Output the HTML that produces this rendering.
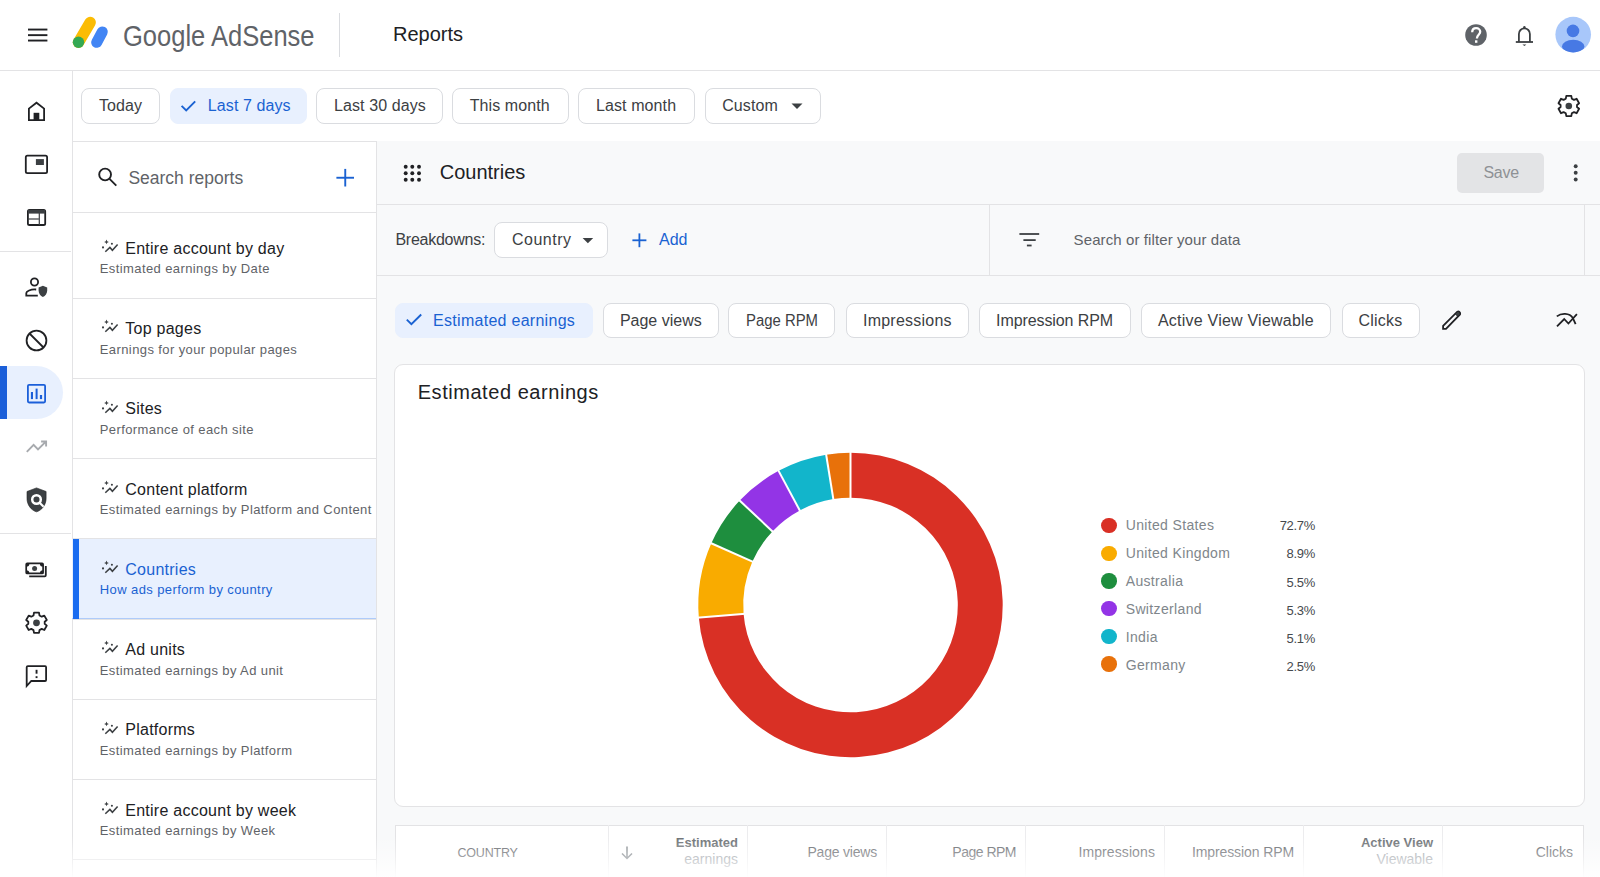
<!DOCTYPE html>
<html><head><meta charset="utf-8">
<style>
*{box-sizing:border-box;margin:0;padding:0}
html,body{width:1600px;height:877px;overflow:hidden;background:#fff;font-family:"Liberation Sans",sans-serif;color:#202124;position:relative}
.box{position:absolute}
.t{position:absolute;white-space:nowrap}
svg.box{overflow:visible}
</style></head><body>
<div class="box" style="left:0;top:0;width:1600px;height:70px;background:#fff"></div>
<div class="box" style="left:0;top:70px;width:1600px;height:1px;background:#e3e3e5"></div>
<svg class="box" style="left:0;top:0" width="60" height="60"><g fill="#202124"><rect x="28" y="28.6" width="19.4" height="1.9"/><rect x="28" y="34.2" width="19.4" height="1.9"/><rect x="28" y="39.6" width="19.4" height="1.9"/></g></svg>
<svg class="box" style="left:60px;top:10px" width="60" height="50" viewBox="60 10 60 50">
<line x1="90.2" y1="22.4" x2="78.5" y2="42.3" stroke="#fbbc04" stroke-width="11.4" stroke-linecap="round"/>
<circle cx="78.5" cy="42.3" r="5.7" fill="#34a853"/>
<line x1="102.3" y1="31.9" x2="96.7" y2="42.3" stroke="#4285f4" stroke-width="11" stroke-linecap="round"/>
</svg>
<div class="t" style="left:122.5px;top:21px;font-size:29.5px;line-height:29.5px;color:#5f6368;transform:scaleX(0.865);transform-origin:0 0;">Google AdSense</div>
<div class="box" style="left:339px;top:13px;width:1px;height:44px;background:#dadce0"></div>
<div class="t" style="left:393px;top:24px;font-size:20px;line-height:20px;color:#202124;">Reports</div>
<svg class="box" style="left:1456px;top:15px" width="40" height="40" viewBox="1456 15 40 40">
<circle cx="1476" cy="35" r="10.8" fill="#5f6368"/>
<path d="M1472.2 32.3c0-2.5 1.7-4.1 4-4.1s4 1.6 4 3.6c0 2.9-3.3 3.1-3.3 6.6" fill="none" stroke="#fff" stroke-width="2.3"/>
<rect x="1475" y="40.3" width="2.4" height="2.5" fill="#fff"/>
</svg>
<svg class="box" style="left:1504px;top:15px" width="40" height="40" viewBox="1504 15 40 40">
<path d="M1518.9 42V33.9A5.5 5.5 0 0 1 1529.9 33.9V42" fill="none" stroke="#3c4043" stroke-width="1.8"/>
<rect x="1515.8" y="41.1" width="17.2" height="1.8" fill="#3c4043"/>
<circle cx="1524.4" cy="27.2" r="1.2" fill="#3c4043"/>
<path d="M1522.4 44.4h4l-2 1.7z" fill="#3c4043"/>
</svg>
<svg class="box" style="left:1550px;top:12px" width="46" height="46" viewBox="1550 12 46 46">
<defs><clipPath id="av"><circle cx="1573.2" cy="34.6" r="17.8"/></clipPath></defs>
<circle cx="1573.2" cy="34.6" r="17.8" fill="#a8c7fa"/>
<g clip-path="url(#av)" fill="#4779e4">
<circle cx="1573" cy="30.9" r="6.3"/>
<ellipse cx="1573.2" cy="46.5" rx="11.2" ry="6.8"/>
</g>
</svg>
<div class="box" style="left:72px;top:70px;width:1px;height:807px;background:#e3e3e5"></div>
<div class="box" style="left:0;top:251px;width:71px;height:1px;background:#e3e3e5"></div>
<div class="box" style="left:0;top:533px;width:71px;height:1px;background:#e3e3e5"></div>
<div class="box" style="left:7px;top:366px;width:56px;height:53px;background:#e8f0fe;border-radius:0 26.5px 26.5px 0"></div>
<div class="box" style="left:0;top:366px;width:7px;height:53px;background:#1b5fd9"></div>
<svg class="box" style="left:0;top:70px" width="71" height="640" viewBox="0 70 71 640">
<!-- home -->
<path d="M28.9 120.2V108.6L36.5 102.7L44.1 108.6V120.2Z" fill="none" stroke="#202124" stroke-width="1.8" stroke-linejoin="miter"/>
<rect x="33.6" y="112.8" width="5.7" height="7.6" fill="#202124"/>
<!-- ad card -->
<rect x="25.8" y="155.6" width="21.3" height="17.5" rx="1.6" fill="none" stroke="#202124" stroke-width="1.8"/>
<rect x="35.9" y="159.1" width="8" height="5.9" fill="#3c4043"/>
<!-- layout -->
<rect x="27.9" y="209.8" width="17.3" height="15.2" rx="1.6" fill="none" stroke="#202124" stroke-width="1.8"/>
<rect x="27.9" y="209.8" width="17.3" height="3.8" fill="#3c4043"/>
<rect x="38.7" y="213" width="1.2" height="12" fill="#3c4043"/>
<rect x="27.9" y="218.4" width="11" height="1.2" fill="#3c4043"/>
<!-- person shield -->
<circle cx="34.5" cy="282" r="3.6" fill="none" stroke="#202124" stroke-width="1.8"/>
<path d="M36.2 289.5c-0.6-0.05-1.1-0.1-1.7-0.1c-3.6 0-8.2 1.6-8.2 3.7v2.5h11.5" fill="none" stroke="#202124" stroke-width="1.8"/>
<path d="M42.9 285.8l-4.3 1.6v3.2c0 2.9 1.8 5.5 4.3 6.3c2.5-0.8 4.3-3.4 4.3-6.3v-3.2z" fill="#3c4043"/>
<!-- block -->
<circle cx="36.5" cy="340.5" r="9.9" fill="none" stroke="#202124" stroke-width="1.8"/>
<line x1="29.5" y1="333.5" x2="43.5" y2="347.5" stroke="#202124" stroke-width="1.8"/>
<!-- chart (active) -->
<rect x="27.9" y="384.9" width="17.2" height="17.6" rx="1.2" fill="none" stroke="#1b5fd9" stroke-width="1.8"/>
<rect x="30.9" y="392" width="2.1" height="7.1" fill="#1b5fd9"/>
<rect x="35.6" y="388.6" width="2" height="10.5" fill="#1b5fd9"/>
<rect x="39.9" y="395" width="2.2" height="4.1" fill="#1b5fd9"/>
<!-- trending -->
<path d="M26.8 451.8L33.6 444.9L38 449.4L45.6 441.8M41.1 441.5H46.1V446.5" fill="none" stroke="#a7aaae" stroke-width="1.9"/>
<!-- shield search -->
<path d="M36.5 487.9L27 491.5V498.4C27 504.7 31.1 510.3 36.5 511.8C41.9 510.3 46.1 504.7 46.1 498.4V491.5Z" fill="#3c4043" stroke="#202124" stroke-width="0.6"/>
<circle cx="36.5" cy="499.5" r="4.3" fill="none" stroke="#fff" stroke-width="2.5"/>
<line x1="39.6" y1="502.7" x2="43.6" y2="506.8" stroke="#fff" stroke-width="2.2"/>
<!-- money -->
<rect x="26.2" y="563.4" width="16.9" height="10" rx="1" fill="none" stroke="#202124" stroke-width="1.7"/>
<circle cx="34.6" cy="568.4" r="2.5" fill="#3c4043"/>
<path d="M26.2 563.4h3.2a3.2 3.2 0 0 1-3.2 3.2zM43.1 563.4h-3.2a3.2 3.2 0 0 0 3.2 3.2zM26.2 573.4h3.2a3.2 3.2 0 0 0-3.2-3.2zM43.1 573.4h-3.2a3.2 3.2 0 0 1 3.2-3.2z" fill="#202124"/>
<path d="M29.2 576.3H44.8Q45.8 576.3 45.8 575.3V566" fill="none" stroke="#202124" stroke-width="1.8"/>
<!-- gear -->
<g transform="translate(36.5 622.8)">
<path d="M-2.5 -10.1H2.5L3 -7.3L5.2 -6.1L7.8 -7.2L10.3 -2.8L8.2 -1V1L10.3 2.8L7.8 7.2L5.2 6.1L3 7.3L2.5 10.1H-2.5L-3 7.3L-5.2 6.1L-7.8 7.2L-10.3 2.8L-8.2 1V-1L-10.3 -2.8L-7.8 -7.2L-5.2 -6.1L-3 -7.3Z" fill="none" stroke="#202124" stroke-width="1.8" stroke-linejoin="round"/>
<circle cx="0" cy="0" r="3.4" fill="#3c4043"/>
</g>
<!-- feedback -->
<path d="M26.7 686V667.3C26.7 666.6 27.2 666.2 27.9 666.2H45.1C45.7 666.2 46.1 666.6 46.1 667.3V680C46.1 680.6 45.7 681 45.1 681H31.3Z" fill="none" stroke="#202124" stroke-width="1.8" stroke-linejoin="miter"/>
<rect x="35.6" y="669.8" width="1.9" height="3.9" fill="#202124"/>
<rect x="35.6" y="676.2" width="1.9" height="1.9" fill="#202124"/>
</svg>
<div class="box" style="left:72px;top:141px;width:1528px;height:1px;background:#e3e3e5"></div>
<div class="box" style="left:81px;top:88px;width:79px;height:35.5px;background:#fff;border:1px solid #dadce0;border-radius:8px"></div>
<div class="t" style="left:99px;top:98px;font-size:16px;line-height:16px;color:#3c4043;letter-spacing:0.1px;">Today</div>
<div class="box" style="left:169.5px;top:88px;width:137.5px;height:35.5px;background:#e8f0fe;border:1px solid #e8f0fe;border-radius:8px"></div>
<div class="t" style="left:207.8px;top:98px;font-size:16px;line-height:16px;color:#1a62d2;letter-spacing:0.1px;">Last 7 days</div>
<div class="box" style="left:316px;top:88px;width:127px;height:35.5px;background:#fff;border:1px solid #dadce0;border-radius:8px"></div>
<div class="t" style="left:334px;top:98px;font-size:16px;line-height:16px;color:#3c4043;letter-spacing:0.1px;">Last 30 days</div>
<div class="box" style="left:452px;top:88px;width:116.5px;height:35.5px;background:#fff;border:1px solid #dadce0;border-radius:8px"></div>
<div class="t" style="left:469.7px;top:98px;font-size:16px;line-height:16px;color:#3c4043;letter-spacing:0.1px;">This month</div>
<div class="box" style="left:578px;top:88px;width:117px;height:35.5px;background:#fff;border:1px solid #dadce0;border-radius:8px"></div>
<div class="t" style="left:596px;top:98px;font-size:16px;line-height:16px;color:#3c4043;letter-spacing:0.1px;">Last month</div>
<div class="box" style="left:704.5px;top:88px;width:116.0px;height:35.5px;background:#fff;border:1px solid #dadce0;border-radius:8px"></div>
<div class="t" style="left:722.2px;top:98px;font-size:16px;line-height:16px;color:#3c4043;letter-spacing:0.1px;">Custom</div>
<svg class="box" style="left:175px;top:95px" width="26" height="22" viewBox="175 95 26 22"><path d="M181.6 105.8L186.2 110.4L195.2 101.3" fill="none" stroke="#1a62d2" stroke-width="1.9"/></svg>
<svg class="box" style="left:785px;top:98px" width="24" height="16" viewBox="785 98 24 16"><path d="M791.5 103.6H802.5L797 108.9Z" fill="#3c4043"/></svg>
<svg class="box" style="left:1548px;top:85px" width="42" height="42" viewBox="-21 -21 42 42">
<g transform="translate(-0.2 0)">
<path d="M-2.5 -10.1H2.5L3 -7.3L5.2 -6.1L7.8 -7.2L10.3 -2.8L8.2 -1V1L10.3 2.8L7.8 7.2L5.2 6.1L3 7.3L2.5 10.1H-2.5L-3 7.3L-5.2 6.1L-7.8 7.2L-10.3 2.8L-8.2 1V-1L-10.3 -2.8L-7.8 -7.2L-5.2 -6.1L-3 -7.3Z" fill="none" stroke="#202124" stroke-width="1.8" stroke-linejoin="round"/>
<circle cx="0" cy="0" r="3.3" fill="#3c4043"/>
</g></svg>
<div class="box" style="left:73px;top:142px;width:304px;height:735px;background:#fff"></div>
<div class="box" style="left:376px;top:141px;width:1px;height:736px;background:#e3e3e5"></div>
<svg class="box" style="left:92px;top:160px" width="32" height="32" viewBox="92 160 32 32"><circle cx="105.1" cy="174.5" r="5.9" fill="none" stroke="#202124" stroke-width="1.9"/><line x1="109.3" y1="178.7" x2="116.3" y2="185.7" stroke="#202124" stroke-width="1.9"/></svg>
<div class="t" style="left:128.4px;top:170px;font-size:17.5px;line-height:17.5px;color:#5f6368;">Search reports</div>
<svg class="box" style="left:330px;top:162px" width="30" height="30" viewBox="330 162 30 30"><g fill="#1a62d2"><rect x="336.4" y="176.8" width="17.6" height="1.9"/><rect x="344.3" y="168.9" width="1.9" height="17.6"/></g></svg>
<div class="box" style="left:72px;top:212px;width:304px;height:1px;background:#e3e3e5"></div>
<svg class="box" style="left:98px;top:236.00px" width="24" height="20" viewBox="98 236 24 20"><path d="M106.5 239.6L107.2 241.25L108.85 241.95L107.2 242.65L106.5 244.3L105.8 242.65L104.15 241.95L105.8 241.25Z" fill="#3c4043"/><circle cx="103" cy="247.4" r="1.05" fill="#3c4043"/><circle cx="111.9" cy="243.8" r="1.05" fill="#3c4043"/><path d="M105.3 251.8L109.9 247.4L112.4 250.3L117.6 244.5" fill="none" stroke="#3c4043" stroke-width="1.55"/></svg>
<div class="t" style="left:125.3px;top:241px;font-size:16px;line-height:16px;color:#202124;letter-spacing:0.25px;">Entire account by day</div>
<div class="t" style="left:99.8px;top:262px;font-size:13px;line-height:13px;color:#5f6368;letter-spacing:0.4px;">Estimated earnings by Date</div>
<div class="box" style="left:72px;top:297.5px;width:304px;height:1px;background:#e3e3e5"></div>
<svg class="box" style="left:98px;top:316.25px" width="24" height="20" viewBox="98 236 24 20"><path d="M106.5 239.6L107.2 241.25L108.85 241.95L107.2 242.65L106.5 244.3L105.8 242.65L104.15 241.95L105.8 241.25Z" fill="#3c4043"/><circle cx="103" cy="247.4" r="1.05" fill="#3c4043"/><circle cx="111.9" cy="243.8" r="1.05" fill="#3c4043"/><path d="M105.3 251.8L109.9 247.4L112.4 250.3L117.6 244.5" fill="none" stroke="#3c4043" stroke-width="1.55"/></svg>
<div class="t" style="left:125.3px;top:321px;font-size:16px;line-height:16px;color:#202124;letter-spacing:0.25px;">Top pages</div>
<div class="t" style="left:99.8px;top:343px;font-size:13px;line-height:13px;color:#5f6368;letter-spacing:0.4px;">Earnings for your popular pages</div>
<div class="box" style="left:72px;top:377.8px;width:304px;height:1px;background:#e3e3e5"></div>
<svg class="box" style="left:98px;top:396.50px" width="24" height="20" viewBox="98 236 24 20"><path d="M106.5 239.6L107.2 241.25L108.85 241.95L107.2 242.65L106.5 244.3L105.8 242.65L104.15 241.95L105.8 241.25Z" fill="#3c4043"/><circle cx="103" cy="247.4" r="1.05" fill="#3c4043"/><circle cx="111.9" cy="243.8" r="1.05" fill="#3c4043"/><path d="M105.3 251.8L109.9 247.4L112.4 250.3L117.6 244.5" fill="none" stroke="#3c4043" stroke-width="1.55"/></svg>
<div class="t" style="left:125.3px;top:401px;font-size:16px;line-height:16px;color:#202124;letter-spacing:0.25px;">Sites</div>
<div class="t" style="left:99.8px;top:423px;font-size:13px;line-height:13px;color:#5f6368;letter-spacing:0.4px;">Performance of each site</div>
<div class="box" style="left:72px;top:458.1px;width:304px;height:1px;background:#e3e3e5"></div>
<svg class="box" style="left:98px;top:476.75px" width="24" height="20" viewBox="98 236 24 20"><path d="M106.5 239.6L107.2 241.25L108.85 241.95L107.2 242.65L106.5 244.3L105.8 242.65L104.15 241.95L105.8 241.25Z" fill="#3c4043"/><circle cx="103" cy="247.4" r="1.05" fill="#3c4043"/><circle cx="111.9" cy="243.8" r="1.05" fill="#3c4043"/><path d="M105.3 251.8L109.9 247.4L112.4 250.3L117.6 244.5" fill="none" stroke="#3c4043" stroke-width="1.55"/></svg>
<div class="t" style="left:125.3px;top:482px;font-size:16px;line-height:16px;color:#202124;letter-spacing:0.25px;">Content platform</div>
<div class="t" style="left:99.8px;top:503px;font-size:13px;line-height:13px;color:#5f6368;letter-spacing:0.4px;">Estimated earnings by Platform and Content</div>
<div class="box" style="left:72px;top:538px;width:304px;height:80.7px;background:#e8f0fe"></div>
<div class="box" style="left:72px;top:618px;width:304px;height:1px;background:#aecbfa"></div>
<div class="box" style="left:73px;top:538px;width:6px;height:81px;background:#1a6cf0"></div>
<div class="box" style="left:72px;top:538.4px;width:304px;height:1px;background:#e3e3e5"></div>
<svg class="box" style="left:98px;top:557.00px" width="24" height="20" viewBox="98 236 24 20"><path d="M106.5 239.6L107.2 241.25L108.85 241.95L107.2 242.65L106.5 244.3L105.8 242.65L104.15 241.95L105.8 241.25Z" fill="#3c4043"/><circle cx="103" cy="247.4" r="1.05" fill="#3c4043"/><circle cx="111.9" cy="243.8" r="1.05" fill="#3c4043"/><path d="M105.3 251.8L109.9 247.4L112.4 250.3L117.6 244.5" fill="none" stroke="#3c4043" stroke-width="1.55"/></svg>
<div class="t" style="left:125.3px;top:562px;font-size:16px;line-height:16px;color:#1a62d2;letter-spacing:0.25px;">Countries</div>
<div class="t" style="left:99.8px;top:583px;font-size:13px;line-height:13px;color:#1a62d2;letter-spacing:0.4px;">How ads perform by country</div>
<div class="box" style="left:72px;top:618.7px;width:304px;height:1px;background:#e3e3e5"></div>
<svg class="box" style="left:98px;top:637.25px" width="24" height="20" viewBox="98 236 24 20"><path d="M106.5 239.6L107.2 241.25L108.85 241.95L107.2 242.65L106.5 244.3L105.8 242.65L104.15 241.95L105.8 241.25Z" fill="#3c4043"/><circle cx="103" cy="247.4" r="1.05" fill="#3c4043"/><circle cx="111.9" cy="243.8" r="1.05" fill="#3c4043"/><path d="M105.3 251.8L109.9 247.4L112.4 250.3L117.6 244.5" fill="none" stroke="#3c4043" stroke-width="1.55"/></svg>
<div class="t" style="left:125.3px;top:642px;font-size:16px;line-height:16px;color:#202124;letter-spacing:0.25px;">Ad units</div>
<div class="t" style="left:99.8px;top:664px;font-size:13px;line-height:13px;color:#5f6368;letter-spacing:0.4px;">Estimated earnings by Ad unit</div>
<div class="box" style="left:72px;top:699.0px;width:304px;height:1px;background:#e3e3e5"></div>
<svg class="box" style="left:98px;top:717.50px" width="24" height="20" viewBox="98 236 24 20"><path d="M106.5 239.6L107.2 241.25L108.85 241.95L107.2 242.65L106.5 244.3L105.8 242.65L104.15 241.95L105.8 241.25Z" fill="#3c4043"/><circle cx="103" cy="247.4" r="1.05" fill="#3c4043"/><circle cx="111.9" cy="243.8" r="1.05" fill="#3c4043"/><path d="M105.3 251.8L109.9 247.4L112.4 250.3L117.6 244.5" fill="none" stroke="#3c4043" stroke-width="1.55"/></svg>
<div class="t" style="left:125.3px;top:722px;font-size:16px;line-height:16px;color:#202124;letter-spacing:0.25px;">Platforms</div>
<div class="t" style="left:99.8px;top:744px;font-size:13px;line-height:13px;color:#5f6368;letter-spacing:0.4px;">Estimated earnings by Platform</div>
<div class="box" style="left:72px;top:779.3px;width:304px;height:1px;background:#e3e3e5"></div>
<svg class="box" style="left:98px;top:797.75px" width="24" height="20" viewBox="98 236 24 20"><path d="M106.5 239.6L107.2 241.25L108.85 241.95L107.2 242.65L106.5 244.3L105.8 242.65L104.15 241.95L105.8 241.25Z" fill="#3c4043"/><circle cx="103" cy="247.4" r="1.05" fill="#3c4043"/><circle cx="111.9" cy="243.8" r="1.05" fill="#3c4043"/><path d="M105.3 251.8L109.9 247.4L112.4 250.3L117.6 244.5" fill="none" stroke="#3c4043" stroke-width="1.55"/></svg>
<div class="t" style="left:125.3px;top:803px;font-size:16px;line-height:16px;color:#202124;letter-spacing:0.25px;">Entire account by week</div>
<div class="t" style="left:99.8px;top:824px;font-size:13px;line-height:13px;color:#5f6368;letter-spacing:0.4px;">Estimated earnings by Week</div>
<div class="box" style="left:72px;top:859px;width:304px;height:1px;background:#e3e3e5"></div>
<div class="box" style="left:377px;top:141px;width:1223px;height:736px;background:#f8f9fa"></div>
<div class="box" style="left:377px;top:204px;width:1223px;height:1px;background:#e3e3e5"></div>
<div class="box" style="left:377px;top:275px;width:1223px;height:1px;background:#e3e3e5"></div>
<div class="box" style="left:988.5px;top:205px;width:1px;height:70px;background:#e3e3e5"></div>
<div class="box" style="left:1584px;top:205px;width:1px;height:70px;background:#e3e3e5"></div>
<svg class="box" style="left:398px;top:159px" width="28" height="28" viewBox="398 159 28 28"><g fill="#202124"><circle cx="405.7" cy="166.7" r="1.95"/><circle cx="405.7" cy="173.2" r="1.95"/><circle cx="405.7" cy="179.8" r="1.95"/><circle cx="412.3" cy="166.7" r="1.95"/><circle cx="412.3" cy="173.2" r="1.95"/><circle cx="412.3" cy="179.8" r="1.95"/><circle cx="419" cy="166.7" r="1.95"/><circle cx="419" cy="173.2" r="1.95"/><circle cx="419" cy="179.8" r="1.95"/></g></svg>
<div class="t" style="left:439.7px;top:162px;font-size:20px;line-height:20px;color:#202124;">Countries</div>
<div class="box" style="left:1457px;top:153px;width:87px;height:39.5px;background:#e3e4e6;border-radius:5px"></div>
<div class="t" style="left:1483.5px;top:165px;font-size:16px;line-height:16px;color:#8e9195;letter-spacing:-0.3px;">Save</div>
<svg class="box" style="left:1565px;top:160px" width="22" height="26" viewBox="1565 160 22 26"><g fill="#3c4043"><circle cx="1575.7" cy="166.2" r="1.95"/><circle cx="1575.7" cy="172.8" r="1.95"/><circle cx="1575.7" cy="179.5" r="1.95"/></g></svg>
<div class="t" style="left:395.4px;top:232px;font-size:16px;line-height:16px;color:#3c4043;letter-spacing:-0.25px;">Breakdowns:</div>
<div class="box" style="left:494px;top:222px;width:113.5px;height:35.5px;background:#fff;border:1px solid #dadce0;border-radius:8px"></div>
<div class="t" style="left:512px;top:232px;font-size:16px;line-height:16px;color:#3c4043;letter-spacing:0.5px;">Country</div>
<svg class="box" style="left:578px;top:230px" width="20" height="20" viewBox="578 230 20 20"><path d="M582.6 238H593.2L587.9 243.3Z" fill="#3c4043"/></svg>
<svg class="box" style="left:628px;top:230px" width="22" height="22" viewBox="628 230 22 22"><g fill="#1a62d2"><rect x="632.4" y="239.4" width="14" height="1.8"/><rect x="638.5" y="233.4" width="1.8" height="13.8"/></g></svg>
<div class="t" style="left:659px;top:232px;font-size:16px;line-height:16px;color:#1a62d2;">Add</div>
<svg class="box" style="left:1014px;top:228px" width="30" height="24" viewBox="1014 228 30 24"><g fill="#3c4043"><rect x="1019.4" y="233.1" width="19.8" height="1.8"/><rect x="1023.4" y="239.2" width="12.3" height="1.8"/><rect x="1026.9" y="244.6" width="4.7" height="1.8"/></g></svg>
<div class="t" style="left:1073.6px;top:232px;font-size:15px;line-height:15px;color:#5f6368;letter-spacing:0.1px;">Search or filter your data</div>
<div class="box" style="left:394.7px;top:302.5px;width:198.3px;height:35.0px;background:#e8f0fe;border:1px solid #e8f0fe;border-radius:8px"></div>
<div class="t" style="left:433.1px;top:313px;font-size:16px;line-height:16px;color:#1a62d2;letter-spacing:0.28px;">Estimated earnings</div>
<div class="box" style="left:602.5px;top:302.5px;width:116.5px;height:35.0px;background:#fff;border:1px solid #dadce0;border-radius:8px"></div>
<div class="t" style="left:619.9px;top:313px;font-size:16px;line-height:16px;color:#3c4043;letter-spacing:0px;">Page views</div>
<div class="box" style="left:728.4px;top:302.5px;width:107.10000000000002px;height:35.0px;background:#fff;border:1px solid #dadce0;border-radius:8px"></div>
<div class="t" style="left:745.5px;top:313px;font-size:16px;line-height:16px;color:#3c4043;letter-spacing:0px;transform:scaleX(0.93);transform-origin:0 0;">Page RPM</div>
<div class="box" style="left:845.5px;top:302.5px;width:123.10000000000002px;height:35.0px;background:#fff;border:1px solid #dadce0;border-radius:8px"></div>
<div class="t" style="left:863px;top:313px;font-size:16px;line-height:16px;color:#3c4043;letter-spacing:0.23px;">Impressions</div>
<div class="box" style="left:978.5px;top:302.5px;width:152.29999999999995px;height:35.0px;background:#fff;border:1px solid #dadce0;border-radius:8px"></div>
<div class="t" style="left:996.1px;top:313px;font-size:16px;line-height:16px;color:#3c4043;letter-spacing:-0.1px;">Impression RPM</div>
<div class="box" style="left:1140.9px;top:302.5px;width:190.5999999999999px;height:35.0px;background:#fff;border:1px solid #dadce0;border-radius:8px"></div>
<div class="t" style="left:1157.9px;top:313px;font-size:16px;line-height:16px;color:#3c4043;letter-spacing:0.23px;">Active View Viewable</div>
<div class="box" style="left:1341.5px;top:302.5px;width:78.5px;height:35.0px;background:#fff;border:1px solid #dadce0;border-radius:8px"></div>
<div class="t" style="left:1358.6px;top:313px;font-size:16px;line-height:16px;color:#3c4043;letter-spacing:0.2px;">Clicks</div>
<svg class="box" style="left:400px;top:306px" width="28" height="26" viewBox="400 306 28 26"><path d="M406.8 319.6L411.4 324.2L421.2 314.5" fill="none" stroke="#1a62d2" stroke-width="1.9"/></svg>
<svg class="box" style="left:1436px;top:300px" width="40" height="40" viewBox="1436 300 40 40">
<path d="M1443.1 328.8V325.9L1457.3 311.7A2.05 2.05 0 0 1 1460 314.4L1446 328.8Z" fill="none" stroke="#202124" stroke-width="1.8" stroke-linejoin="miter"/>
<path d="M1455.2 313.8L1457.3 311.7A2.05 2.05 0 0 1 1460 314.4L1457.9 316.5Z" fill="#3c4043" stroke="#202124" stroke-width="1"/>
</svg>
<svg class="box" style="left:1546px;top:300px" width="40" height="40" viewBox="1546 300 40 40">
<path d="M1556.8 316.4C1561 313.1 1569.5 312.5 1573 318.3L1575.6 324.2" fill="none" stroke="#202124" stroke-width="1.8"/>
<path d="M1557 326.3L1564.2 319L1568.4 323.5L1576.9 314.2" fill="none" stroke="#202124" stroke-width="1.8"/>
</svg>
<div class="box" style="left:394px;top:364px;width:1190.5px;height:443px;background:#fff;border:1px solid #e3e3e5;border-radius:9px"></div>
<div class="t" style="left:417.7px;top:382px;font-size:20px;line-height:20px;color:#202124;letter-spacing:0.55px;">Estimated earnings</div>
<svg class="box" style="left:0;top:0" width="1600" height="877" viewBox="0 0 1600 877"><path d="M850.50 452.80A152.2 152.2 0 1 1 698.81 617.47L743.56 613.79A107.3 107.3 0 1 0 850.50 497.70Z" fill="#d93025"/>
<path d="M698.81 617.47A152.2 152.2 0 0 1 711.35 543.34L752.40 561.53A107.3 107.3 0 0 0 743.56 613.79Z" fill="#f9ab00"/>
<path d="M711.35 543.34A152.2 152.2 0 0 1 739.73 500.62L772.41 531.41A107.3 107.3 0 0 0 752.40 561.53Z" fill="#1e8e3e"/>
<path d="M739.73 500.62A152.2 152.2 0 0 1 778.58 470.87L799.80 510.44A107.3 107.3 0 0 0 772.41 531.41Z" fill="#9334e6"/>
<path d="M778.58 470.87A152.2 152.2 0 0 1 826.17 454.76L833.34 499.08A107.3 107.3 0 0 0 799.80 510.44Z" fill="#12b5cb"/>
<path d="M826.17 454.76A152.2 152.2 0 0 1 850.50 452.80L850.50 497.70A107.3 107.3 0 0 0 833.34 499.08Z" fill="#e8710a"/>
<line x1="850.50" y1="499.70" x2="850.50" y2="450.80" stroke="#fff" stroke-width="2"/>
<line x1="745.55" y1="613.63" x2="696.82" y2="617.63" stroke="#fff" stroke-width="2"/>
<line x1="754.23" y1="562.34" x2="709.52" y2="542.53" stroke="#fff" stroke-width="2"/>
<line x1="773.87" y1="532.78" x2="738.28" y2="499.25" stroke="#fff" stroke-width="2"/>
<line x1="800.74" y1="512.20" x2="777.63" y2="469.10" stroke="#fff" stroke-width="2"/>
<line x1="833.66" y1="501.05" x2="825.85" y2="452.78" stroke="#fff" stroke-width="2"/>
</svg>
<div class="box" style="left:1101.2px;top:517.8px;width:15.4px;height:15.4px;border-radius:50%;background:#d93025"></div>
<div class="t" style="left:1125.7px;top:518px;font-size:14px;line-height:14px;color:#80868b;letter-spacing:0.35px;">United States</div>
<div class="t" style="right:285px;top:519px;font-size:13px;line-height:13px;color:#45494d;text-align:right;letter-spacing:-0.3px;">72.7%</div>
<div class="box" style="left:1101.2px;top:545.5px;width:15.4px;height:15.4px;border-radius:50%;background:#f9ab00"></div>
<div class="t" style="left:1125.7px;top:546px;font-size:14px;line-height:14px;color:#80868b;letter-spacing:0.35px;">United Kingdom</div>
<div class="t" style="right:285px;top:547px;font-size:13px;line-height:13px;color:#45494d;text-align:right;letter-spacing:-0.3px;">8.9%</div>
<div class="box" style="left:1101.2px;top:573.2px;width:15.4px;height:15.4px;border-radius:50%;background:#1e8e3e"></div>
<div class="t" style="left:1125.7px;top:574px;font-size:14px;line-height:14px;color:#80868b;letter-spacing:0.35px;">Australia</div>
<div class="t" style="right:285px;top:576px;font-size:13px;line-height:13px;color:#45494d;text-align:right;letter-spacing:-0.3px;">5.5%</div>
<div class="box" style="left:1101.2px;top:600.9px;width:15.4px;height:15.4px;border-radius:50%;background:#9334e6"></div>
<div class="t" style="left:1125.7px;top:602px;font-size:14px;line-height:14px;color:#80868b;letter-spacing:0.35px;">Switzerland</div>
<div class="t" style="right:285px;top:604px;font-size:13px;line-height:13px;color:#45494d;text-align:right;letter-spacing:-0.3px;">5.3%</div>
<div class="box" style="left:1101.2px;top:628.6px;width:15.4px;height:15.4px;border-radius:50%;background:#12b5cb"></div>
<div class="t" style="left:1125.7px;top:630px;font-size:14px;line-height:14px;color:#80868b;letter-spacing:0.35px;">India</div>
<div class="t" style="right:285px;top:632px;font-size:13px;line-height:13px;color:#45494d;text-align:right;letter-spacing:-0.3px;">5.1%</div>
<div class="box" style="left:1101.2px;top:656.3px;width:15.4px;height:15.4px;border-radius:50%;background:#e8710a"></div>
<div class="t" style="left:1125.7px;top:658px;font-size:14px;line-height:14px;color:#80868b;letter-spacing:0.35px;">Germany</div>
<div class="t" style="right:285px;top:660px;font-size:13px;line-height:13px;color:#45494d;text-align:right;letter-spacing:-0.3px;">2.5%</div>
<div class="box" style="left:395px;top:824.5px;width:1189px;height:60px;background:#fff;border:1px solid #e3e3e5;border-bottom:none"></div>
<div class="box" style="left:608px;top:825px;width:1px;height:52px;background:#ececee"></div>
<div class="box" style="left:747px;top:825px;width:1px;height:52px;background:#ececee"></div>
<div class="box" style="left:886px;top:825px;width:1px;height:52px;background:#ececee"></div>
<div class="box" style="left:1025px;top:825px;width:1px;height:52px;background:#ececee"></div>
<div class="box" style="left:1164px;top:825px;width:1px;height:52px;background:#ececee"></div>
<div class="box" style="left:1303px;top:825px;width:1px;height:52px;background:#ececee"></div>
<div class="box" style="left:1442px;top:825px;width:1px;height:52px;background:#ececee"></div>
<div class="t" style="left:457.5px;top:847px;font-size:12.5px;line-height:12.5px;color:#5f6368;letter-spacing:-0.2px;">COUNTRY</div>
<svg class="box" style="left:616px;top:842px" width="22" height="22" viewBox="616 842 22 22"><path d="M627 846.5V858.5M622 853.5L627 858.5L632 853.5" fill="none" stroke="#80868b" stroke-width="1.5"/></svg>
<div class="t" style="right:862px;top:836px;font-size:13px;line-height:13px;color:#6b6f73;text-align:right;font-weight:bold;">Estimated</div>
<div class="t" style="right:862px;top:852px;font-size:14px;line-height:14px;color:#9aa0a6;text-align:right;letter-spacing:0px;">earnings</div>
<div class="t" style="right:723px;top:845px;font-size:14px;line-height:14px;color:#5f6368;text-align:right;letter-spacing:-0.2px;">Page views</div>
<div class="t" style="right:584px;top:845px;font-size:14px;line-height:14px;color:#5f6368;text-align:right;letter-spacing:-0.5px;">Page RPM</div>
<div class="t" style="right:445px;top:845px;font-size:14px;line-height:14px;color:#5f6368;text-align:right;letter-spacing:0.1px;">Impressions</div>
<div class="t" style="right:306px;top:845px;font-size:14px;line-height:14px;color:#5f6368;text-align:right;letter-spacing:-0.1px;">Impression RPM</div>
<div class="t" style="right:167px;top:836px;font-size:13px;line-height:13px;color:#6b6f73;text-align:right;font-weight:bold;">Active View</div>
<div class="t" style="right:167px;top:852px;font-size:14px;line-height:14px;color:#9aa0a6;text-align:right;letter-spacing:0px;">Viewable</div>
<div class="t" style="right:27px;top:845px;font-size:14px;line-height:14px;color:#5f6368;text-align:right;letter-spacing:0px;">Clicks</div>
<div class="box" style="left:0;top:836px;width:1600px;height:41px;background:linear-gradient(rgba(255,255,255,0) 0%,rgba(255,255,255,0.45) 55%,rgba(255,255,255,0.95) 100%)"></div>
</body></html>
